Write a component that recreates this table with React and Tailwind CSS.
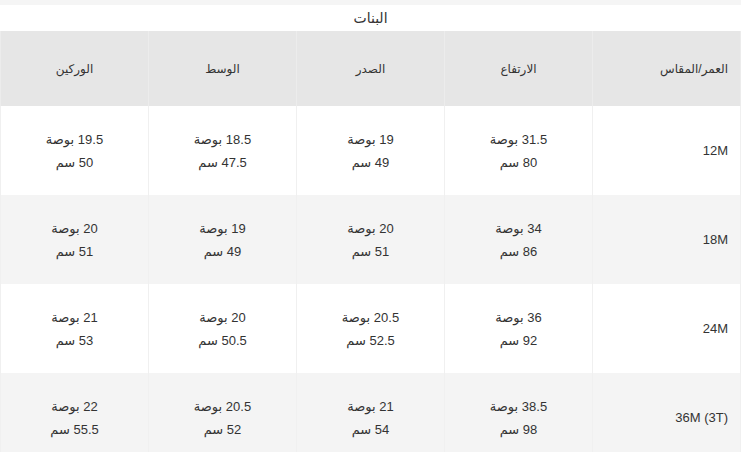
import React from 'react';

const rows = [
  { size: '12M', cells: [['31.5', '80'], ['19', '49'], ['18.5', '47.5'], ['19.5', '50']] },
  { size: '18M', cells: [['34', '86'], ['20', '51'], ['19', '49'], ['20', '51']] },
  { size: '24M', cells: [['36', '92'], ['20.5', '52.5'], ['20', '50.5'], ['21', '53']] },
  { size: '36M (3T)', cells: [['38.5', '98'], ['21', '54'], ['20.5', '52'], ['22', '55.5']] },
];

const headers = ['العمر/المقاس', 'الارتفاع', 'الصدر', 'الوسط', 'الوركين'];

export default function App() {
  return (
    <div
      dir="rtl"
      className="w-[741px] h-[452px] overflow-hidden bg-white text-[#333]"
      style={{ fontFamily: '"Liberation Sans", "DejaVu Sans ExtraLight", "DejaVu Sans", sans-serif' }}
    >
      <div className="h-[5px] bg-[#f5f5f5]" />
      <div className="h-[26px] flex items-center justify-center text-[14px]">البنات</div>
      <table className="w-full table-fixed border-collapse text-[13px]">
        <thead>
          <tr className="h-[75px] bg-[#e6e6e6]">
            {headers.map((h, i) => (
              <th
                key={h}
                className={`font-normal text-[12px] border-x border-[#ececec] ${
                  i === 0 ? 'text-right pr-3 w-[148px]' : 'text-center'
                }`}
              >
                {h}
              </th>
            ))}
          </tr>
        </thead>
        <tbody>
          {rows.map((r, ri) => (
            <tr key={r.size} className={`h-[89px] ${ri % 2 ? 'bg-[#f4f4f4]' : 'bg-white'}`}>
              <td className="text-right pr-3 border-x border-[#f0f0f0]">{r.size}</td>
              {r.cells.map(([inch, cm], ci) => (
                <td key={ci} className="text-center leading-[23px] border-x border-[#f0f0f0]">
                  <div>{inch} بوصة</div>
                  <div>{cm} سم</div>
                </td>
              ))}
            </tr>
          ))}
        </tbody>
      </table>
    </div>
  );
}
